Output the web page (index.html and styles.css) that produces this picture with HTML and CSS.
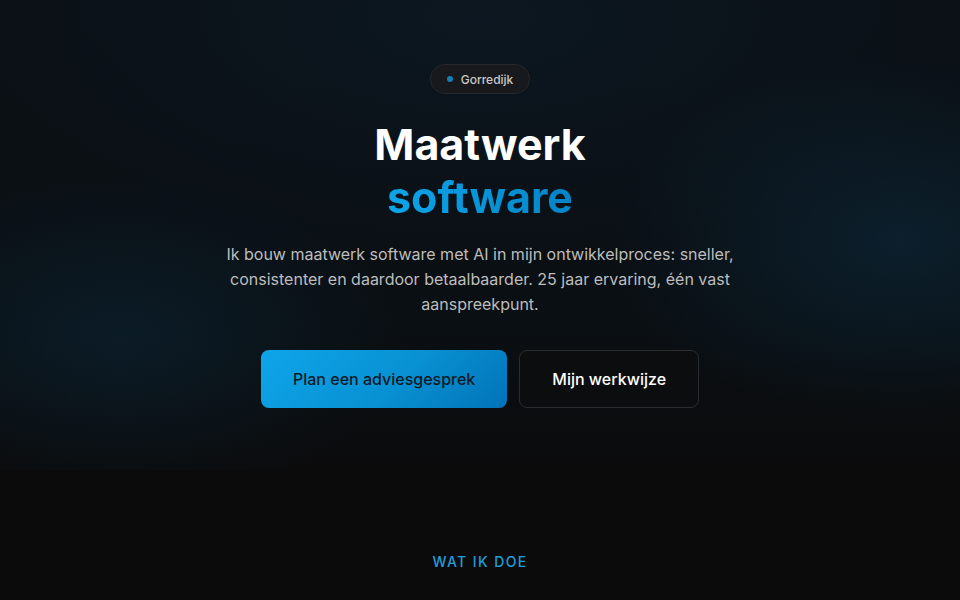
FILE: index.html
```html
<!DOCTYPE html>
<html lang="nl">
<head>
<meta charset="utf-8">
<title>Maatwerk software</title>
<link rel="stylesheet" href="styles.css">
</head>
<body>
<section class="hero">
  <div class="pill"><span class="dot"></span><span class="pill-text">Gorredijk</span></div>
  <h1 class="title">Maatwerk<br><span class="accent">software</span></h1>
  <p class="lead">Ik bouw maatwerk software met AI in mijn ontwikkelproces: sneller, consistenter en daardoor betaalbaarder. 25 jaar ervaring, één vast aanspreekpunt.</p>
  <div class="actions">
    <a class="btn btn-primary" href="#">Plan een adviesgesprek</a>
    <a class="btn btn-secondary" href="#">Mijn werkwijze</a>
  </div>
</section>
<section class="services">
  <div class="eyebrow">WAT IK DOE</div>
  <h2 class="section-title">Maatwerk dat werkt</h2>
</section>
</body>
</html>
```
FILE: styles.css
```css
* { box-sizing: border-box; }
html, body { margin: 0; padding: 0; }
body {
  background: #0b0b0c;
  color: #ffffff;
  font-family: Inter, "Noto Sans", sans-serif;
  overflow: hidden;
  height: 600px;
}
.hero {
  height: 470px;
  padding-top: 64px;
  display: flex;
  flex-direction: column;
  align-items: center;
  text-align: center;
  background:
    radial-gradient(ellipse 420px 260px at 900px 240px, rgba(14, 64, 96, 0.32), transparent 70%),
    radial-gradient(ellipse 400px 240px at 120px 340px, rgba(14, 64, 96, 0.26), transparent 70%),
    radial-gradient(ellipse 700px 320px at 480px 20px, rgba(14, 40, 60, 0.30), transparent 75%),
    linear-gradient(180deg, #0b1015 0%, #0a0f13 70%, #0b0b0c 100%);
}
.pill {
  display: inline-flex;
  align-items: center;
  gap: 8px;
  height: 30px;
  padding: 0 16px;
  border: 1px solid #25282c;
  background: #17191c;
  border-radius: 999px;
}
.dot {
  width: 6px;
  height: 6px;
  border-radius: 50%;
  background: #1580b5;
}
.pill-text {
  font-size: 12px;
  color: #c9c9c9;
  font-weight: 500;
}
.title {
  margin: 24px 0 0;
  font-size: 43px;
  line-height: 53px;
  font-weight: 700;
  letter-spacing: 0;
}
.accent {
  background: linear-gradient(90deg, #0ea5e9, #0284c7);
  -webkit-background-clip: text;
  background-clip: text;
  color: transparent;
}
.lead {
  margin: 18px 0 0;
  max-width: 560px;
  font-size: 16px;
  line-height: 25px;
  color: #bdbdbd;
}
.actions {
  margin-top: 33px;
  display: flex;
  gap: 12px;
}
.btn {
  display: inline-flex;
  align-items: center;
  justify-content: center;
  height: 58px;
  padding: 0 32px;
  border-radius: 8px;
  font-size: 16px;
  font-weight: 500;
  text-decoration: none;
}
.btn-primary {
  background: linear-gradient(135deg, #0ea5e9 0%, #0891d2 55%, #0273b8 100%);
  color: #0b1a28;
}
.btn-secondary {
  background: #0c0d0e;
  border: 1px solid #2a2c2f;
  color: #ffffff;
}
.services {
  display: flex;
  flex-direction: column;
  align-items: center;
  padding-top: 83px;
}
.eyebrow {
  font-size: 14px;
  line-height: 18px;
  letter-spacing: 0.1em;
  font-weight: 500;
  color: #1e9fd8;
}
.section-title {
  margin: 21px 0 0;
  font-size: 36px;
  line-height: 44px;
  font-weight: 700;
}
```
